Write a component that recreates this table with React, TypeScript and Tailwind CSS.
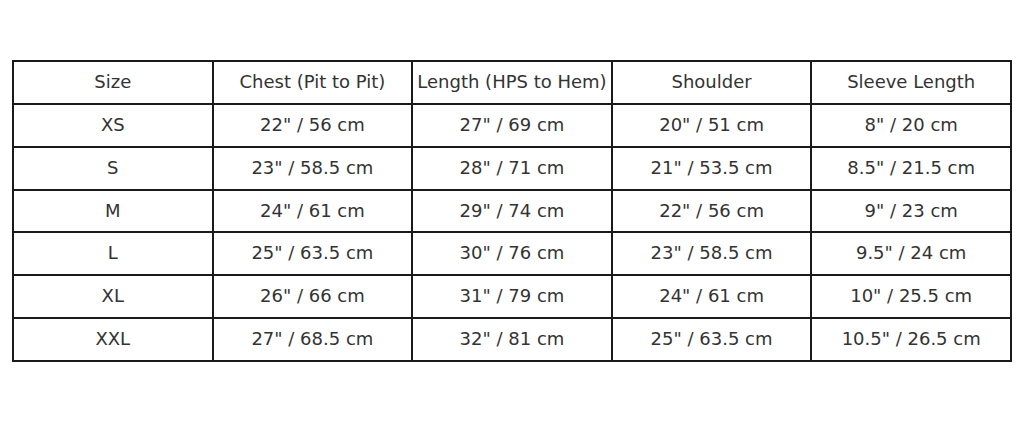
import React from "react";

const headers = [
  "Size",
  "Chest (Pit to Pit)",
  "Length (HPS to Hem)",
  "Shoulder",
  "Sleeve Length",
];

const rows = [
  ["XS", '22" / 56 cm', '27" / 69 cm', '20" / 51 cm', '8" / 20 cm'],
  ["S", '23" / 58.5 cm', '28" / 71 cm', '21" / 53.5 cm', '8.5" / 21.5 cm'],
  ["M", '24" / 61 cm', '29" / 74 cm', '22" / 56 cm', '9" / 23 cm'],
  ["L", '25" / 63.5 cm', '30" / 76 cm', '23" / 58.5 cm', '9.5" / 24 cm'],
  ["XL", '26" / 66 cm', '31" / 79 cm', '24" / 61 cm', '10" / 25.5 cm'],
  ["XXL", '27" / 68.5 cm', '32" / 81 cm', '25" / 63.5 cm', '10.5" / 26.5 cm'],
];

export default function App() {
  return (
    <div className="min-h-[422px] bg-white pt-[60px] pl-[12px] font-['DejaVu_Sans',sans-serif] text-[#333]">
      <table className="border-collapse table-fixed w-[1000px] text-[18px]">
        <thead>
          <tr className="h-[42.86px]">
            {headers.map((h) => (
              <th
                key={h}
                className="border-2 border-[#1a1a1a] font-normal text-center p-0 pb-[2px]"
              >
                {h}
              </th>
            ))}
          </tr>
        </thead>
        <tbody>
          {rows.map((row) => (
            <tr key={row[0]} className="h-[42.86px]">
              {row.map((cell, i) => (
                <td
                  key={i}
                  className="border-2 border-[#1a1a1a] text-center p-0 pb-[2px]"
                >
                  {cell}
                </td>
              ))}
            </tr>
          ))}
        </tbody>
      </table>
    </div>
  );
}
